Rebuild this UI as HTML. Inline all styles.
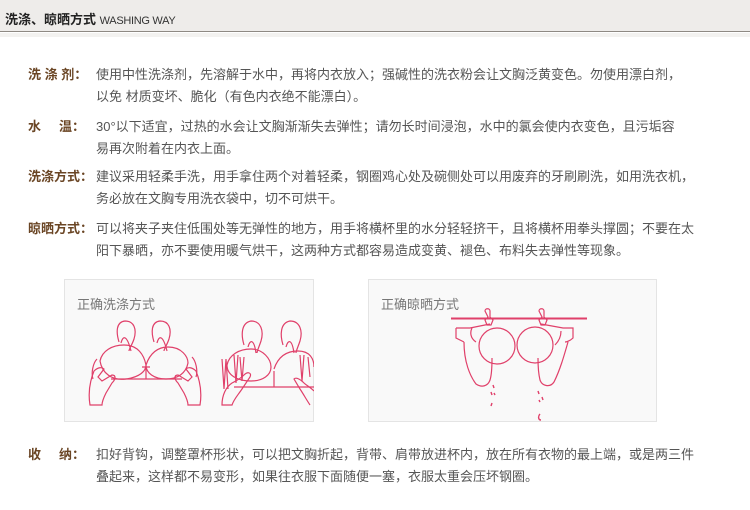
<!DOCTYPE html>
<html><head><meta charset="utf-8"><style>
*{margin:0;padding:0;box-sizing:border-box}
body{width:750px;height:510px;background:#fff;font-family:"Liberation Sans","Noto Sans CJK SC",sans-serif;position:relative;overflow:hidden}
.hd{position:absolute;left:0;top:0;width:750px;height:32px;background:#eeecea;border-bottom:1px solid #8e8983}
.hd2{position:absolute;left:0;top:33px;width:750px;height:4px;background:#f3f2f0}
.hd span{position:absolute;left:5px;top:9px;font-size:13px;font-weight:bold;color:#222}
.hd small{font-size:11px;font-weight:normal;color:#333;letter-spacing:-0.3px}
.r{position:absolute;left:28px;font-size:13px;color:#555;line-height:22px}
.r b{position:absolute;left:0;top:0;color:#6a4524;font-weight:bold;width:66px}
.r p{margin-left:68px;width:610px}
.box{position:absolute;top:279px;height:143px;background:#f9f9f9;border:1px solid #e4e4e4}
.box .t{position:absolute;left:12px;top:14px;font-size:13px;color:#777}
</style></head><body>
<div class="hd"><span>洗涤、晾晒方式 <small>WASHING WAY</small></span></div><div class="hd2"></div>
<div class="r" style="top:64px"><b>洗 涤 剂：</b><p>使用中性洗涤剂，先溶解于水中，再将内衣放入；强碱性的洗衣粉会让文胸泛黄变色。勿使用漂白剂，<br>以免 材质变坏、脆化（有色内衣绝不能漂白）。</p></div>
<div class="r" style="top:116px"><b>水 &nbsp; &nbsp; 温：</b><p>30°以下适宜，过热的水会让文胸渐渐失去弹性；请勿长时间浸泡，水中的氯会使内衣变色，且污垢容<br>易再次附着在内衣上面。</p></div>
<div class="r" style="top:166px"><b>洗涤方式：</b><p>建议采用轻柔手洗，用手拿住两个对着轻柔，钢圈鸡心处及碗侧处可以用废弃的牙刷刷洗，如用洗衣机，<br>务必放在文胸专用洗衣袋中，切不可烘干。</p></div>
<div class="r" style="top:218px"><b>晾晒方式：</b><p>可以将夹子夹住低围处等无弹性的地方，用手将横杯里的水分轻轻挤干，且将横杯用拳头撑圆；不要在太<br>阳下暴晒，亦不要使用暖气烘干，这两种方式都容易造成变黄、褪色、布料失去弹性等现象。</p></div>
<div class="box" style="left:64px;width:250px"><div class="t">正确洗涤方式</div>
<svg width="250" height="143" style="position:absolute;left:-1px;top:-1px" fill="none" stroke="#e0406a" stroke-width="1.2">
<path d="M55 63c-3-10-3-20 6-21 9 0 12 8 9 18-2 6-5 10-5 12M57 64c2-8 6-8 10 8"/>
<path d="M90 63c-3-10-3-20 6-21 9 0 12 8 9 18-2 6-5 10-5 12M93 64c2-8 6-8 10 8"/>
<path d="M36 82c2-10 12-16 24-16 14 0 20 10 22 20 0 6-6 12-20 14-14 2-24-6-26-18z"/>
<path d="M82 86c4-12 12-18 22-18 14 0 20 10 20 16-2 10-10 16-22 16-12 0-20-6-20-14z"/>
<path d="M33 80c-4 4-6 14-4 20M128 78c4 4 6 14 4 20M47 100h71M82 88v12M78 88h8"/>
<path d="M26 126c-2-12 0-24 4-34 4-4 8-4 10-2l-6 8 4 4 10-6c4 0 4 4 0 8l-6 10c-2 4-4 8-4 12zM136 126c2-12 0-24-4-34-4-4-8-4-10-2l6 8-4 4-10-6c-4 0-4 4 0 8l6 10c2 4 4 8 4 12z"/>
<path d="M180 66c-3-10-3-22 7-24 10 0 13 10 10 20-2 6-4 10-4 12M184 68c2-8 6-8 8 6"/>
<path d="M219 66c-3-10-3-22 7-24 10 0 13 10 10 20-2 6-4 10-4 12M222 68c2-8 6-8 8 6"/>
<path d="M163 86c2-10 12-16 24-16 12 0 20 10 20 18 0 8-8 14-20 14-14 0-24-6-24-16z"/>
<path d="M210 90c4-12 12-18 24-18 12 0 16 8 16 16"/>
<path d="M170 108h80M210 92v16"/>
<path d="M158 80l2 30 2-30 2 30M170 76l2 28 2-28M176 78l2 24 2-24M236 76l2 26 2-26M244 78l2 20"/>
<path d="M158 126c0-10 4-18 10-22 4-2 8-4 12-8 4-4 8-2 6 2l-8 12c-4 6-8 10-10 16zM250 112c-4-4-8-6-10-8-4-4-8-6-10-4l6 10c4 6 6 10 10 16"/>
</svg></div>
<div class="box" style="left:368px;width:289px"><div class="t">正确晾晒方式</div>
<svg width="289" height="143" style="position:absolute;left:-1px;top:-1px" fill="none" stroke="#e0406a" stroke-width="1.2">
<path d="M83 39.5h136" stroke-width="2"/>
<path d="M117 32c0-3 5-3 5 0v6l3 3-2 5h-4l-2-5 3-3zM171 32c0-3 5-3 5 0v6l3 3-2 5h-4l-2-5 3-3z"/>
<circle cx="129" cy="67" r="18"/><circle cx="167" cy="66" r="18"/>
<path d="M88 49h14l20-4M104 49c-2 4-2 10 4 14M88 49v10l8 4M173 45l22 4h10v10c-4 4-8 4-8 4M193 52c0 6-2 10-6 14"/>
<path d="M96 63c0 20 6 34 12 42 6 4 12 2 14-4 2-6 2-16 2-22M200 63c-4 14-8 28-14 40-4 6-12 4-14-2-2-8-2-16-2-22"/>
<path d="M125 106l1 3M123 113l1 3M126 114l1 2M124 124l-1 3M170 112l1 3M174 118l1 3M171 121l1 2M172 135c-2 2-2 6 1 6" stroke-width="1.4"/>
</svg></div>
<div class="r" style="top:444px"><b>收 &nbsp; &nbsp; 纳：</b><p>扣好背钩，调整罩杯形状，可以把文胸折起，背带、肩带放进杯内，放在所有衣物的最上端，或是两三件<br>叠起来，这样都不易变形，如果往衣服下面随便一塞，衣服太重会压坏钢圈。</p></div>
</body></html>
